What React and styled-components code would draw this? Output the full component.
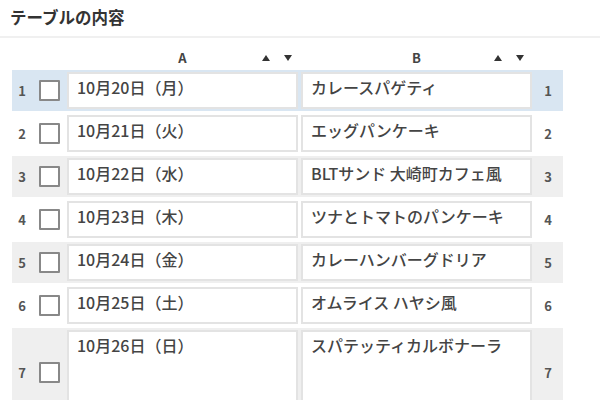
import React from "react";
import styled, { createGlobalStyle } from "styled-components";

const Global = createGlobalStyle`
  html, body { margin: 0; padding: 0; background: #fff; }
  body {
    width: 600px; height: 400px; overflow: hidden;
    font-family: "Noto Sans CJK JP", "Noto Sans", sans-serif;
    color: #444;
  }
`;

const Page = styled.div`
  width: 600px;
  height: 400px;
  overflow: hidden;
`;

const Title = styled.h1`
  margin: 0;
  padding: 6px 0 0 10px;
  height: 30px;
  box-sizing: border-box;
  font-size: 16.5px;
  font-weight: 700;
  line-height: 22px;
  color: #333;
`;

const Divider = styled.div`
  height: 2px;
  background: #f0f0f0;
  margin-top: 6px;
`;

const Table = styled.div`
  display: flex;
  flex-direction: column;
  gap: 2px;
  padding: 9px 0 0 12px;
  width: 551px;
`;

const Cols = styled.div`
  display: grid;
  grid-template-columns: 55px 234px 232px 30px;
`;

const HeaderRow = styled(Cols)`
  height: 21px;
  align-items: center;
`;

const HeadCell = styled.div`
  position: relative;
  text-align: center;
  font-size: 13px;
  font-weight: 700;
  color: #444;
  padding-right: ${(p) => p.$pad}px;
`;

const Sorts = styled.span`
  position: absolute;
  top: 50%;
  right: ${(p) => p.$right}px;
  transform: translateY(-50%);
  display: flex;
  gap: 14px;
  align-items: center;
`;

const Tri = styled.span`
  width: 0;
  height: 0;
  border-left: 4px solid transparent;
  border-right: 4px solid transparent;
  ${(p) =>
    p.$up
      ? "border-bottom: 6px solid #333;"
      : "border-top: 6px solid #333;"}
`;

const Row = styled(Cols)`
  height: ${(p) => p.$h}px;
  background: ${(p) =>
    p.$sel ? "#d9e6f2" : p.$odd ? "#efefef" : "#ffffff"};
  padding: 2px 0;
  box-sizing: border-box;
`;

const NumCell = styled.div`
  display: flex;
  align-items: center;
  gap: 13px;
  padding-left: 6px;
  font-size: 13px;
  font-weight: 700;
  color: #555;
`;

const Num = styled.span`
  width: 8px;
  text-align: center;
`;

const Check = styled.span`
  width: 17px;
  height: 17px;
  border: 2px solid #888;
  background: #fff;
  border-radius: 1px;
`;

const Field = styled.div`
  background: #fff;
  border: 2px solid #e3e3e3;
  box-sizing: border-box;
  padding: 3px 8px;
  font-size: 16px;
  font-weight: 500;
  line-height: 21px;
  color: #444;
  margin-right: ${(p) => p.$gap}px;
  white-space: nowrap;
  overflow: hidden;
`;

const RightNum = styled.div`
  display: flex;
  align-items: center;
  justify-content: center;
  font-size: 13px;
  font-weight: 700;
  color: #555;
`;

const rows = [
  ["10月20日（月）", "カレースパゲティ"],
  ["10月21日（火）", "エッグパンケーキ"],
  ["10月22日（水）", "BLTサンド 大崎町カフェ風"],
  ["10月23日（木）", "ツナとトマトのパンケーキ"],
  ["10月24日（金）", "カレーハンバーグドリア"],
  ["10月25日（土）", "オムライス ハヤシ風"],
  ["10月26日（日）", "スパテッティカルボナーラ"],
];

export default function App() {
  return (
    <Page>
      <Global />
      <Title>テーブルの内容</Title>
      <Divider />
      <Table>
        <HeaderRow>
          <div />
          <HeadCell $pad={3}>
            A
            <Sorts $right={9}>
              <Tri $up />
              <Tri />
            </Sorts>
          </HeadCell>
          <HeadCell $pad={1}>
            B
            <Sorts $right={9}>
              <Tri $up />
              <Tri />
            </Sorts>
          </HeadCell>
          <div />
        </HeaderRow>
        {rows.map(([a, b], i) => (
          <Row
            key={i}
            $h={i === 6 ? 88 : 41}
            $sel={i === 0}
            $odd={i % 2 === 0}
          >
            <NumCell>
              <Num>{i + 1}</Num>
              <Check />
            </NumCell>
            <Field $gap={3}>{a}</Field>
            <Field $gap={1}>{b}</Field>
            <RightNum>{i + 1}</RightNum>
          </Row>
        ))}
      </Table>
    </Page>
  );
}
